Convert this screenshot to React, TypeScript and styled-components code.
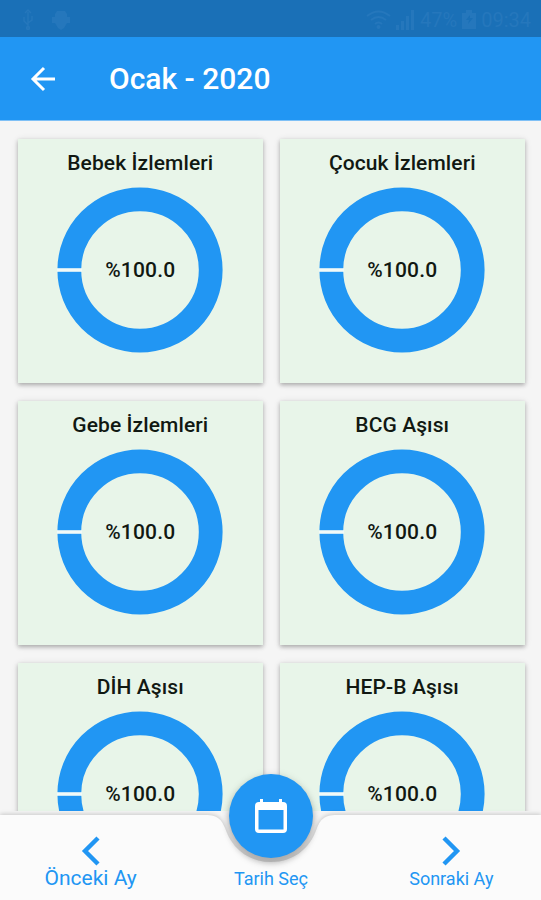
import React from "react";
import styled, { createGlobalStyle } from "styled-components";

const blue = "#2196f3";

const GlobalStyle = createGlobalStyle`
  * { box-sizing: border-box; }
  body { margin: 0; background: #f5f5f5; font-family: Roboto, "Liberation Sans", sans-serif; }
`;

const Screen = styled.div`
  display: flex;
  flex-direction: column;
  height: 900px;
  overflow: hidden;
  background: #f5f5f5;
`;

const StatusBar = styled.div`
  flex: none;
  height: 37px;
  padding: 2px 10px 0 19px;
  display: flex;
  justify-content: space-between;
  align-items: center;
  background: #1a70b7;
  color: #2577bc;
`;

const StatusGroup = styled.div<{ $gap: number }>`
  display: flex;
  align-items: center;
  gap: ${(p) => p.$gap}px;
`;

const StatusText = styled.span<{ $size: number }>`
  font-size: ${(p) => p.$size}px;
  line-height: 22px;
`;

const AppBar = styled.header`
  flex: none;
  height: 84px;
  padding: 0 27px;
  display: flex;
  align-items: center;
  gap: 50px;
  background: ${blue};
  border-bottom: 1px solid #7fc0f6;
  color: #fff;
`;

const IconButton = styled.button`
  display: flex;
  padding: 0;
  border: 0;
  background: none;
  color: inherit;
`;

const Heading = styled.h1`
  margin: 0;
  padding-top: 1px;
  font-size: 30px;
  font-weight: 500;
  line-height: 36px;
`;

const Content = styled.main`
  flex: none;
  height: 690px;
  overflow: hidden;
  padding: 18px 16px 0 18px;
  display: grid;
  grid-template-columns: 244.5px 244.5px;
  grid-auto-rows: 244px;
  gap: 18px 17.5px;
`;

const Card = styled.section`
  display: flex;
  flex-direction: column;
  align-items: center;
  padding-top: 12px;
  background: #e8f5e9;
  box-shadow: 0 2px 4px rgba(0, 0, 0, 0.24), 0 1px 7px rgba(0, 0, 0, 0.12);
`;

const CardTitle = styled.h2`
  margin: 0;
  font-size: 21px;
  font-weight: 500;
  line-height: 25px;
  letter-spacing: 0.1px;
  color: #111812;
  white-space: nowrap;
`;

const Gauge = styled.div`
  display: grid;
  place-items: center;
  margin-top: 11px;
  width: 166px;
  height: 166px;
  > * { grid-area: 1 / 1; }
`;

const GaugeValue = styled.span`
  font-size: 21px;
  font-weight: 500;
  line-height: 26px;
  letter-spacing: 0.2px;
  color: #111812;
`;

const Footer = styled.footer`
  position: relative;
  flex: none;
  margin-top: 4px;
  height: 85px;
  display: grid;
  grid-template-columns: repeat(3, 1fr);
  color: ${blue};
`;

const FooterShadow = styled.div`
  position: absolute;
  inset: 0;
  filter: drop-shadow(0 -1px 2px rgba(0, 0, 0, 0.18));
`;

const FooterSurface = styled.div`
  height: 100%;
  background: #fbfbfb;
  clip-path: path("M0 0 H205 C219 0 222 6 225 13 C232 34 249 47 271 47 C293 47 310 34 317 13 C320 6 323 0 337 0 H541 V85 H0 Z");
`;

const NavItem = styled.button`
  position: relative;
  display: flex;
  flex-direction: column;
  align-items: center;
  justify-content: flex-end;
  padding: 0 0 9px 1px;
  border: 0;
  background: none;
  color: inherit;
  font-family: inherit;
`;

const NavLabel = styled.span<{ $size: number }>`
  font-size: ${(p) => p.$size}px;
  line-height: 25px;
`;

const Fab = styled.button`
  position: absolute;
  top: -41px;
  left: 229px;
  width: 84px;
  height: 84px;
  display: grid;
  place-items: center;
  padding: 0;
  border: 0;
  border-radius: 50%;
  background: ${blue};
  color: #fff;
  box-shadow: 0 5px 7px rgba(0, 0, 0, 0.26), 0 1px 8px rgba(0, 0, 0, 0.12);
`;

const charts = [
  { title: "Bebek İzlemleri", value: "%100.0" },
  { title: "Çocuk İzlemleri", value: "%100.0" },
  { title: "Gebe İzlemleri", value: "%100.0" },
  { title: "BCG Aşısı", value: "%100.0" },
  { title: "DİH Aşısı", value: "%100.0" },
  { title: "HEP-B Aşısı", value: "%100.0" },
];

const Ring = () => (
  <svg width="166" height="166" viewBox="0 0 166 166">
    <circle cx="83" cy="83" r="70.7" fill="none" stroke={blue} strokeWidth="23.8" />
    <path d="M0 83H25" stroke="#f2faf8" strokeWidth="3.6" />
  </svg>
);

const UsbIcon = () => (
  <svg width="18" height="22" viewBox="0 0 18 22" fill="none" stroke="currentColor" strokeWidth="1.5">
    <path d="M9 20V3M5 8v4l4 4M13 7v4l-4 3M6 4l3-3 3 3" />
    <circle cx="9" cy="19" r="1.5" />
  </svg>
);

const AndroidIcon = () => (
  <svg width="20" height="20" viewBox="0 0 20 20" fill="currentColor">
    <path d="M4 4l2-3h8l2 3v3h3v6h-3l-3 5-3 2-3-2-3-5H1V7h3z" />
  </svg>
);

const WifiIcon = () => (
  <svg width="25" height="20" viewBox="0 0 25 20" fill="none" stroke="currentColor" strokeWidth="2">
    <path d="M1 6q11.5-9 23 0M5 10q7.5-6 15 0M9 14q3.5-3 7 0" />
    <circle cx="12.5" cy="17" r="1" />
  </svg>
);

const SignalIcon = () => (
  <svg width="19" height="20" viewBox="0 0 19 20" fill="currentColor">
    <path d="M0 15h3v5H0zM5 11h3v9H5zM10 6h3v14h-3zM15 0h3v20h-3z" />
  </svg>
);

const BatteryIcon = () => (
  <svg width="14" height="19" viewBox="0 0 14 19">
    <path d="M4 0h6v3h4v16H0V3h4z" fill="currentColor" />
    <path d="M8 5l-4 5h3l-1 4 5-6H8z" fill="#1a70b7" />
  </svg>
);

const BackIcon = () => (
  <svg width="32" height="32" viewBox="0 0 32 32" fill="none" stroke="currentColor" strokeWidth="3">
    <path d="M28 16H6M17 5L6 16l11 11" />
  </svg>
);

const Chevron = ({ next }: { next?: boolean }) => (
  <svg width="22" height="30" viewBox="0 0 22 30" fill="none" stroke="currentColor" strokeWidth="4.4">
    <path d={next ? "M4 2l13 13L4 28" : "M18 2L5 15l13 13"} />
  </svg>
);

const CalendarIcon = () => (
  <svg width="32" height="36" viewBox="0 0 32 36" fill="currentColor">
    <path
      fillRule="evenodd"
      d="M5 1h3v3h16V1h3v3h1q4 0 4 4v23q0 4-4 4H4q-4 0-4-4V8q0-4 4-4h1zM3.500 12v19.500h25V12z"
    />
  </svg>
);

export default function App() {
  return (
    <Screen>
      <GlobalStyle />
      <StatusBar>
        <StatusGroup $gap={14}>
          <UsbIcon />
          <AndroidIcon />
        </StatusGroup>
        <StatusGroup $gap={5}>
          <WifiIcon />
          <SignalIcon />
          <StatusText $size={20}>47%</StatusText>
          <BatteryIcon />
          <StatusText $size={20}>09:34</StatusText>
        </StatusGroup>
      </StatusBar>
      <AppBar>
        <IconButton aria-label="Geri">
          <BackIcon />
        </IconButton>
        <Heading>Ocak - 2020</Heading>
      </AppBar>
      <Content>
        {charts.map((c) => (
          <Card key={c.title}>
            <CardTitle>{c.title}</CardTitle>
            <Gauge>
              <Ring />
              <GaugeValue>{c.value}</GaugeValue>
            </Gauge>
          </Card>
        ))}
      </Content>
      <Footer>
        <FooterShadow>
          <FooterSurface />
        </FooterShadow>
        <NavItem>
          <Chevron />
          <NavLabel $size={21}>Önceki Ay</NavLabel>
        </NavItem>
        <NavItem>
          <NavLabel $size={18}>Tarih Seç</NavLabel>
        </NavItem>
        <NavItem>
          <Chevron next />
          <NavLabel $size={18}>Sonraki Ay</NavLabel>
        </NavItem>
        <Fab aria-label="Takvim">
          <CalendarIcon />
        </Fab>
      </Footer>
    </Screen>
  );
}
